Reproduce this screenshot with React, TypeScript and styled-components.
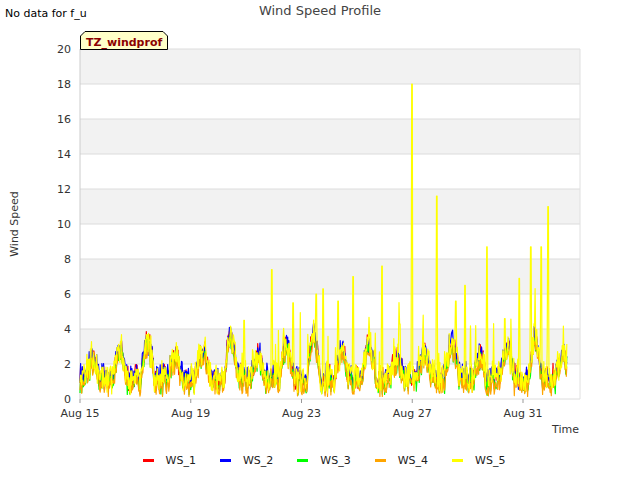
import React from 'react'
import styled, { createGlobalStyle } from 'styled-components'

const GlobalStyle = createGlobalStyle`
  html, body { margin: 0; padding: 0; background: #fff; }
  body { font-family: "DejaVu Sans", "Liberation Sans", sans-serif; }
`

const X0 = 80
const X1 = 580
const Y0 = 49
const Y1 = 399
const DAY = (523 - 80) / 16
const yOf = (v: number) => Y1 - (v / 20) * (Y1 - Y0)
const xOf = (d: number) => X0 + d * DAY

let seed = 7
const rand = () => {
  seed = (seed * 16807) % 2147483647
  return seed / 2147483647
}

const N = 17.6 * 48
const base: number[] = []
for (let i = 0; i < N; i++) {
  const d = i / 48
  const day = Math.floor(d)
  const amp = 1.0 + ((day * 37) % 11) / 8
  const cyc = Math.max(0, Math.sin((d - day) * Math.PI * 2 - 1.2))
  base.push(0.7 + amp * cyc + rand() * 0.9)
}

const spikes: [number, number][] = [
  [412, 18], [437, 11.6], [548, 11], [541, 8.7], [487, 8.7], [272, 7.4], [382, 7.6],
  [353, 7], [323, 6.3], [316, 6], [293, 5.5], [338, 5.6], [465, 6.5], [519, 6.9],
  [531, 8.7], [244, 4.5], [456, 5.6], [505, 4.6], [400, 4.3],
]

const mk = (off: number, jitter: number, yellow = false) =>
  base
    .map((b, i) => {
      let v = Math.max(0.15, b + off + (rand() - 0.5) * jitter)
      const x = xOf(i / 48)
      if (yellow) {
        if (x > 240 && rand() < 0.08) v += rand() * 3
        for (const [sx, sv] of spikes) if (Math.abs(x - sx) < 0.6) v = sv
      }
      return `${x.toFixed(1)},${yOf(v).toFixed(1)}`
    })
    .join(' ')

const SERIES = [
  { name: 'WS_1', color: '#ff0000', pts: mk(0.1, 0.8) },
  { name: 'WS_2', color: '#0000ff', pts: mk(0.2, 0.8) },
  { name: 'WS_3', color: '#00ff00', pts: mk(-0.2, 0.7) },
  { name: 'WS_4', color: '#ffa500', pts: mk(-0.3, 0.7) },
  { name: 'WS_5', color: '#ffff00', pts: mk(0.1, 1.4, true) },
]

const XTICKS = ['Aug 15', 'Aug 19', 'Aug 23', 'Aug 27', 'Aug 31']

export default function App() {
  return (
    <Page>
      <GlobalStyle />
      <Header>
        <NoData>No data for f_u</NoData>
        <Title>Wind Speed Profile</Title>
      </Header>
      <svg width={640} height={420} viewBox="0 20 640 420" style={{ display: 'block' }}>
        {[1, 3, 5, 7, 9].map(i => (
          <rect key={i} x={X0} y={yOf(i * 2 + 2)} width={X1 - X0} height={35} fill="#f2f2f2" />
        ))}
        {Array.from({ length: 11 }, (_, i) => i).map(i => (
          <g key={i}>
            <line x1={X0} x2={X1} y1={yOf(i * 2)} y2={yOf(i * 2)} stroke="#dcdcdc" strokeWidth={1} />
            <text x={71} y={yOf(i * 2) + 4} textAnchor="end" fontSize={11} fill="#333">{i * 2}</text>
          </g>
        ))}
        <line x1={X0} x2={X0} y1={Y0} y2={Y1} stroke="#ccc" />
        <line x1={X1} x2={X1} y1={Y0} y2={Y1} stroke="#e0e0e0" />
        {XTICKS.map((t, i) => (
          <g key={t}>
            <line x1={xOf(i * 4)} x2={xOf(i * 4)} y1={Y1} y2={Y1 + 4} stroke="#999" />
            <text x={xOf(i * 4)} y={417} textAnchor="middle" fontSize={11} fill="#333">{t}</text>
          </g>
        ))}
        {SERIES.map(s => (
          <polyline key={s.name} points={s.pts} fill="none" stroke={s.color} strokeWidth={1.2} strokeLinejoin="round" />
        ))}
        <text x={579} y={433} textAnchor="end" fontSize={11} fill="#333">Time</text>
        <text x={18} y={224} textAnchor="middle" fontSize={11} fill="#333" transform="rotate(-90 18 224)">Wind Speed</text>
        <path d="M80.5,49.5 V36 L85,31.5 H163 L167.5,36 V49.5 Z" fill="#ffffc8" stroke="#000" />
        <text x={86} y={46} fontSize={11} fontWeight="bold" fill="#8b0000">TZ_windprof</text>
      </svg>
      <Legend>
        {SERIES.map(l => (
          <LegendItem key={l.name}>
            <Swatch $color={l.color} />
            {l.name}
          </LegendItem>
        ))}
      </Legend>
    </Page>
  )
}

const Page = styled.div`
  width: 640px;
  height: 480px;
  overflow: hidden;
  display: flex;
  flex-direction: column;
`

const Header = styled.div`
  height: 20px;
  position: relative;
`

const NoData = styled.div`
  position: absolute;
  left: 5px;
  top: 7px;
  font-size: 11px;
  color: #000;
`

const Title = styled.div`
  text-align: center;
  padding-top: 3px;
  font-size: 13px;
  color: #444;
`

const Legend = styled.div`
  display: flex;
  justify-content: center;
  gap: 24px;
  margin-top: 14px;
  margin-left: 8px;
  font-size: 11px;
  color: #222;
`

const LegendItem = styled.div`
  display: flex;
  align-items: center;
  gap: 12px;
`

const Swatch = styled.span<{ $color: string }>`
  width: 11px;
  height: 3px;
  background: ${p => p.$color};
`
